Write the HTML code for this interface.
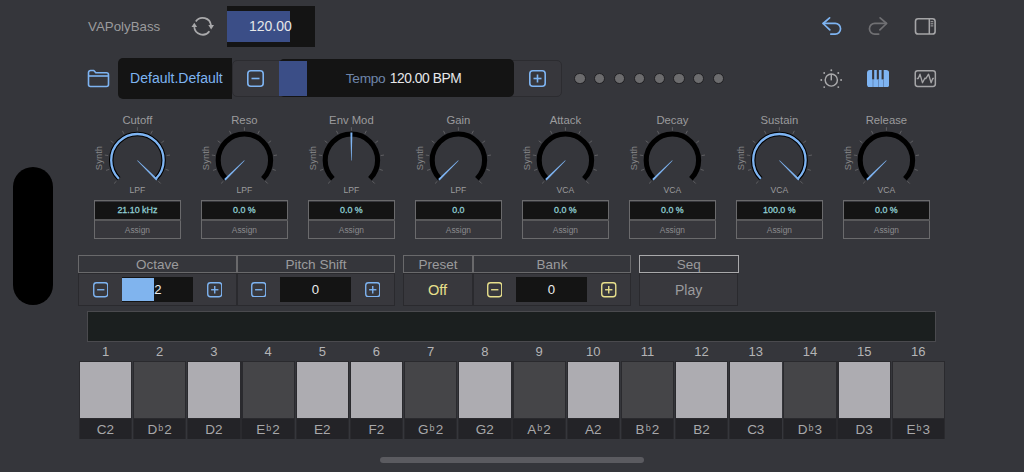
<!DOCTYPE html>
<html><head><meta charset="utf-8"><style>
html,body{margin:0;padding:0;width:1024px;height:472px;overflow:hidden;background:#35363b;font-family:'Liberation Sans', sans-serif;position:relative}
svg{display:block}
</style></head><body>
<div style="position:absolute;left:88.10px;top:19.64px;font-size:13.3px;line-height:13.3px;color:#9b9b9d;white-space:nowrap;">VAPolyBass</div>
<svg style="position:absolute;left:186px;top:10px" width="34" height="32" viewBox="0 0 34 32">
<path d="M9.8 11.4 A8.4 8.4 0 0 1 25 15.4" fill="none" stroke="#a9a9ab" stroke-width="1.75"/>
<path d="M23.4 21.2 A8.4 8.4 0 0 1 8.25 17.2" fill="none" stroke="#a9a9ab" stroke-width="1.75"/>
<polygon points="22.3,15.1 28,15.1 25.15,19.4" fill="#a9a9ab"/>
<polygon points="5.5,17 11.1,17 8.3,12.7" fill="#a9a9ab"/>
</svg>
<div style="position:absolute;left:226.6px;top:5.8px;width:88.1px;height:41.2px;background:#141414"></div>
<div style="position:absolute;left:226.6px;top:10.8px;width:63.4px;height:31.3px;background:#3b4e87"></div>
<div style="position:absolute;left:249.00px;top:19.35px;font-size:14px;line-height:14px;color:#e6e6e8;white-space:nowrap;">120.00</div>
<svg style="position:absolute;left:815px;top:10px" width="130" height="32" viewBox="815 10 130 32">
<path d="M823.3 23.4 H835.2 A5.35 5.35 0 0 1 835.2 34.1 H830.8" fill="none" stroke="#7eb4f2" stroke-width="1.7" stroke-linecap="round"/>
<path d="M829.6 17.9 L823.1 23.5 L829.8 29.9" fill="none" stroke="#7eb4f2" stroke-width="1.7" stroke-linecap="round" stroke-linejoin="round"/>
<path d="M886.3 23.4 H874.8 A5.35 5.35 0 0 0 874.8 34.1 H878.7" fill="none" stroke="#707073" stroke-width="1.7" stroke-linecap="round"/>
<path d="M880.1 17.9 L886.6 23.5 L879.9 29.9" fill="none" stroke="#707073" stroke-width="1.7" stroke-linecap="round" stroke-linejoin="round"/>
<rect x="915.5" y="18.7" width="19.6" height="15.3" rx="2.6" fill="none" stroke="#a5a5a7" stroke-width="1.6"/>
<line x1="929.3" y1="18.7" x2="929.3" y2="34" stroke="#a5a5a7" stroke-width="1.5"/>
<g stroke="#a5a5a7" stroke-width="1"><line x1="930.6" y1="21.7" x2="933.3" y2="21.7"/><line x1="930.6" y1="23.8" x2="933.3" y2="23.8"/><line x1="930.6" y1="25.9" x2="933.3" y2="25.9"/></g>
</svg>
<svg style="position:absolute;left:86px;top:68px" width="25" height="21" viewBox="0 0 25 21">
<path d="M2.5 4.5 A2 2 0 0 1 4.5 2.5 H7.8 L9.8 4.8 H20.5 A2 2 0 0 1 22.5 6.8 V16.5 A2 2 0 0 1 20.5 18.5 H4.5 A2 2 0 0 1 2.5 16.5 Z" fill="none" stroke="#7eb4f2" stroke-width="1.6" stroke-linejoin="round"/>
<line x1="2.5" y1="8" x2="22.5" y2="8" stroke="#7eb4f2" stroke-width="1.6"/>
</svg>
<div style="position:absolute;left:118px;top:58px;width:114px;height:41px;background:#141414;border-radius:5px 0 0 5px"></div>
<div style="position:absolute;left:130.10px;top:71.25px;font-size:14px;line-height:14px;color:#7eb4f2;white-space:nowrap;">Default.Default</div>
<div style="position:absolute;left:232px;top:60px;width:330px;height:37px;box-sizing:border-box;background:#37373c;border:1px solid #2c2c30;border-radius:5px"></div>
<div style="position:absolute;left:279px;top:59.2px;width:235px;height:38px;background:#141414;border-radius:5px"></div>
<div style="position:absolute;left:279px;top:61px;width:28px;height:35px;box-sizing:border-box;background:#3b4e87"></div>
<div style="position:absolute;left:345.80px;top:72.20px;font-size:13.7px;line-height:13.7px;color:#6f86ab;white-space:nowrap;letter-spacing:-0.3px">Tempo</div>
<div style="position:absolute;left:389.80px;top:72.12px;font-size:13.8px;line-height:13.8px;color:#e6e6e8;white-space:nowrap;letter-spacing:-0.45px">120.00 BPM</div>
<svg style="position:absolute;left:247px;top:70px" width="17" height="17" viewBox="0 0 17 17">
<rect x="0.8" y="0.8" width="15.4" height="15.4" rx="3" fill="none" stroke="#7eb4f2" stroke-width="1.6"/>
<line x1="4.5" y1="8.5" x2="12.5" y2="8.5" stroke="#7eb4f2" stroke-width="1.6"/></svg>
<svg style="position:absolute;left:529px;top:70px" width="17" height="17" viewBox="0 0 17 17">
<rect x="0.8" y="0.8" width="15.4" height="15.4" rx="3" fill="none" stroke="#7eb4f2" stroke-width="1.6"/>
<line x1="4.5" y1="8.5" x2="12.5" y2="8.5" stroke="#7eb4f2" stroke-width="1.6"/>
<line x1="8.5" y1="4.5" x2="8.5" y2="12.5" stroke="#7eb4f2" stroke-width="1.6"/></svg>
<div style="position:absolute;left:574.30px;top:72.6px;width:11.4px;height:11.4px;box-sizing:border-box;border-radius:50%;background:#6c6c6e;border:1.2px solid #202023"></div>
<div style="position:absolute;left:594.10px;top:72.6px;width:11.4px;height:11.4px;box-sizing:border-box;border-radius:50%;background:#6c6c6e;border:1.2px solid #202023"></div>
<div style="position:absolute;left:613.90px;top:72.6px;width:11.4px;height:11.4px;box-sizing:border-box;border-radius:50%;background:#6c6c6e;border:1.2px solid #202023"></div>
<div style="position:absolute;left:633.70px;top:72.6px;width:11.4px;height:11.4px;box-sizing:border-box;border-radius:50%;background:#6c6c6e;border:1.2px solid #202023"></div>
<div style="position:absolute;left:653.50px;top:72.6px;width:11.4px;height:11.4px;box-sizing:border-box;border-radius:50%;background:#6c6c6e;border:1.2px solid #202023"></div>
<div style="position:absolute;left:673.30px;top:72.6px;width:11.4px;height:11.4px;box-sizing:border-box;border-radius:50%;background:#6c6c6e;border:1.2px solid #202023"></div>
<div style="position:absolute;left:693.10px;top:72.6px;width:11.4px;height:11.4px;box-sizing:border-box;border-radius:50%;background:#6c6c6e;border:1.2px solid #202023"></div>
<div style="position:absolute;left:712.90px;top:72.6px;width:11.4px;height:11.4px;box-sizing:border-box;border-radius:50%;background:#6c6c6e;border:1.2px solid #202023"></div>
<svg style="position:absolute;left:814px;top:62px" width="34" height="32" viewBox="0 0 34 32">
<circle cx="17.3" cy="18" r="6.1" fill="none" stroke="#a9a9ab" stroke-width="1.45"/>
<line x1="17.3" y1="18.4" x2="17.3" y2="12" stroke="#a9a9ab" stroke-width="1.45"/>
<g fill="#a9a9ab"><circle cx="17.3" cy="8.3" r="0.95"/><circle cx="10.2" cy="11" r="0.95"/><circle cx="24.3" cy="11" r="0.95"/><circle cx="7.3" cy="18" r="0.95"/><circle cx="27.1" cy="18" r="0.95"/><circle cx="10.2" cy="25.1" r="0.95"/><circle cx="24.3" cy="25.1" r="0.95"/></g>
</svg>
<svg style="position:absolute;left:867px;top:70px" width="22.2" height="17.4" viewBox="0 0 22.2 17.4">
<rect x="0" y="0" width="22.2" height="17.4" rx="3" fill="#7eb4f2"/>
<g fill="#36363b"><rect x="5.1" y="0" width="2.1" height="9.4"/><rect x="9.8" y="0" width="2.1" height="9.4"/><rect x="14.6" y="0" width="2.1" height="9.4"/></g>
<g fill="#5d7fae"><rect x="5.6" y="9.4" width="0.8" height="8"/><rect x="11.1" y="9.4" width="0.8" height="8"/><rect x="16.2" y="9.4" width="0.8" height="8"/></g>
</svg>
<svg style="position:absolute;left:912px;top:66px" width="26" height="24" viewBox="0 0 26 24">
<rect x="3.25" y="4.65" width="20.1" height="15.8" rx="2.4" fill="none" stroke="#a5a5a7" stroke-width="1.5"/>
<polyline points="4.7,12.5 6.25,12.5 8,8.2 10.5,16.75 12.9,12.1 13.8,12.6 16.56,8.2 19.14,16.75 20.7,12.5 21.9,12.5" fill="none" stroke="#a5a5a7" stroke-width="1.3" stroke-linejoin="round"/>
</svg>
<svg style="position:absolute;left:97px;top:120px" width="80" height="80" viewBox="0 0 80 80"><line x1="19.47" y1="61.13" x2="17.07" y2="63.53" stroke="#5f5f62" stroke-width="1"/><line x1="12.25" y1="49.35" x2="9.02" y2="50.40" stroke="#5f5f62" stroke-width="1"/><line x1="11.16" y1="35.57" x2="7.81" y2="35.04" stroke="#5f5f62" stroke-width="1"/><line x1="16.45" y1="22.80" x2="13.70" y2="20.80" stroke="#5f5f62" stroke-width="1"/><line x1="26.96" y1="13.83" x2="25.42" y2="10.80" stroke="#5f5f62" stroke-width="1"/><line x1="40.40" y1="10.60" x2="40.40" y2="7.20" stroke="#5f5f62" stroke-width="1"/><line x1="53.84" y1="13.83" x2="55.38" y2="10.80" stroke="#5f5f62" stroke-width="1"/><line x1="64.35" y1="22.80" x2="67.10" y2="20.80" stroke="#5f5f62" stroke-width="1"/><line x1="69.64" y1="35.57" x2="72.99" y2="35.04" stroke="#5f5f62" stroke-width="1"/><line x1="68.55" y1="49.35" x2="71.78" y2="50.40" stroke="#5f5f62" stroke-width="1"/><line x1="61.33" y1="61.13" x2="63.73" y2="63.53" stroke="#5f5f62" stroke-width="1"/><path d="M21.87 58.73 A26.2 26.2 0 1 1 58.93 58.73" fill="none" stroke="#000" stroke-width="4.5"/><path d="M21.87 58.73 A26.2 26.2 0 1 1 58.93 58.73" fill="none" stroke="#7eb4f2" stroke-width="2.3"/><polygon points="40.22,40.68 59.21,60.42 60.62,59.01 40.58,40.32" fill="#7eb4f2"/></svg>
<div style="position:absolute;left:87.40px;top:114.73px;width:100px;text-align:center;font-size:11.3px;line-height:11.3px;color:#9b9b9d;white-space:nowrap;">Cutoff</div>
<div style="position:absolute;left:107.40px;top:186.12px;width:60px;text-align:center;font-size:8.6px;line-height:8.6px;color:#9b9b9d;white-space:nowrap;">LPF</div>
<div style="position:absolute;left:79.00px;top:152.90px;width:40px;height:10px;line-height:10px;font-size:9.3px;letter-spacing:0.1px;color:#8a8a8c;text-align:center;transform:rotate(-90deg);transform-origin:20px 5px">Synth</div>
<div style="position:absolute;left:93.50px;top:200px;width:87.4px;height:39px;box-sizing:border-box;border:1px solid #6a6a6c;background:#37373c"></div>
<div style="position:absolute;left:95.00px;top:201.5px;width:85px;height:17px;background:#141414"></div>
<div style="position:absolute;left:94.50px;top:219px;width:86px;height:2px;background:#58585a"></div>
<div style="position:absolute;left:93.40px;top:205.57px;width:88px;text-align:center;font-size:8.9px;line-height:8.9px;color:#8fcdd2;white-space:nowrap;-webkit-text-stroke:0.3px #8fcdd2">21.10 kHz</div>
<div style="position:absolute;left:93.40px;top:225.89px;width:88px;text-align:center;font-size:8.4px;line-height:8.4px;color:#8a8a8c;white-space:nowrap;">Assign</div>
<svg style="position:absolute;left:204px;top:120px" width="80" height="80" viewBox="0 0 80 80"><line x1="19.47" y1="61.13" x2="17.07" y2="63.53" stroke="#5f5f62" stroke-width="1"/><line x1="12.25" y1="49.35" x2="9.02" y2="50.40" stroke="#5f5f62" stroke-width="1"/><line x1="11.16" y1="35.57" x2="7.81" y2="35.04" stroke="#5f5f62" stroke-width="1"/><line x1="16.45" y1="22.80" x2="13.70" y2="20.80" stroke="#5f5f62" stroke-width="1"/><line x1="26.96" y1="13.83" x2="25.42" y2="10.80" stroke="#5f5f62" stroke-width="1"/><line x1="40.40" y1="10.60" x2="40.40" y2="7.20" stroke="#5f5f62" stroke-width="1"/><line x1="53.84" y1="13.83" x2="55.38" y2="10.80" stroke="#5f5f62" stroke-width="1"/><line x1="64.35" y1="22.80" x2="67.10" y2="20.80" stroke="#5f5f62" stroke-width="1"/><line x1="69.64" y1="35.57" x2="72.99" y2="35.04" stroke="#5f5f62" stroke-width="1"/><line x1="68.55" y1="49.35" x2="71.78" y2="50.40" stroke="#5f5f62" stroke-width="1"/><line x1="61.33" y1="61.13" x2="63.73" y2="63.53" stroke="#5f5f62" stroke-width="1"/><path d="M21.87 58.73 A26.2 26.2 0 1 1 58.93 58.73" fill="none" stroke="#000" stroke-width="5.1"/><polygon points="40.22,40.32 20.18,59.01 21.59,60.42 40.58,40.68" fill="#7eb4f2"/></svg>
<div style="position:absolute;left:194.40px;top:114.73px;width:100px;text-align:center;font-size:11.3px;line-height:11.3px;color:#9b9b9d;white-space:nowrap;">Reso</div>
<div style="position:absolute;left:214.40px;top:186.12px;width:60px;text-align:center;font-size:8.6px;line-height:8.6px;color:#9b9b9d;white-space:nowrap;">LPF</div>
<div style="position:absolute;left:186.00px;top:152.90px;width:40px;height:10px;line-height:10px;font-size:9.3px;letter-spacing:0.1px;color:#8a8a8c;text-align:center;transform:rotate(-90deg);transform-origin:20px 5px">Synth</div>
<div style="position:absolute;left:200.50px;top:200px;width:87.4px;height:39px;box-sizing:border-box;border:1px solid #6a6a6c;background:#37373c"></div>
<div style="position:absolute;left:202.00px;top:201.5px;width:85px;height:17px;background:#141414"></div>
<div style="position:absolute;left:201.50px;top:219px;width:86px;height:2px;background:#58585a"></div>
<div style="position:absolute;left:200.40px;top:205.57px;width:88px;text-align:center;font-size:8.9px;line-height:8.9px;color:#8fcdd2;white-space:nowrap;-webkit-text-stroke:0.3px #8fcdd2">0.0 %</div>
<div style="position:absolute;left:200.40px;top:225.89px;width:88px;text-align:center;font-size:8.4px;line-height:8.4px;color:#8a8a8c;white-space:nowrap;">Assign</div>
<svg style="position:absolute;left:311px;top:120px" width="80" height="80" viewBox="0 0 80 80"><line x1="19.47" y1="61.13" x2="17.07" y2="63.53" stroke="#5f5f62" stroke-width="1"/><line x1="12.25" y1="49.35" x2="9.02" y2="50.40" stroke="#5f5f62" stroke-width="1"/><line x1="11.16" y1="35.57" x2="7.81" y2="35.04" stroke="#5f5f62" stroke-width="1"/><line x1="16.45" y1="22.80" x2="13.70" y2="20.80" stroke="#5f5f62" stroke-width="1"/><line x1="26.96" y1="13.83" x2="25.42" y2="10.80" stroke="#5f5f62" stroke-width="1"/><line x1="40.40" y1="10.60" x2="40.40" y2="7.20" stroke="#5f5f62" stroke-width="1"/><line x1="53.84" y1="13.83" x2="55.38" y2="10.80" stroke="#5f5f62" stroke-width="1"/><line x1="64.35" y1="22.80" x2="67.10" y2="20.80" stroke="#5f5f62" stroke-width="1"/><line x1="69.64" y1="35.57" x2="72.99" y2="35.04" stroke="#5f5f62" stroke-width="1"/><line x1="68.55" y1="49.35" x2="71.78" y2="50.40" stroke="#5f5f62" stroke-width="1"/><line x1="61.33" y1="61.13" x2="63.73" y2="63.53" stroke="#5f5f62" stroke-width="1"/><path d="M21.87 58.73 A26.2 26.2 0 1 1 58.93 58.73" fill="none" stroke="#000" stroke-width="5.1"/><polygon points="40.65,40.50 41.40,12.60 39.40,12.60 40.15,40.50" fill="#7eb4f2"/></svg>
<div style="position:absolute;left:301.40px;top:114.73px;width:100px;text-align:center;font-size:11.3px;line-height:11.3px;color:#9b9b9d;white-space:nowrap;">Env Mod</div>
<div style="position:absolute;left:321.40px;top:186.12px;width:60px;text-align:center;font-size:8.6px;line-height:8.6px;color:#9b9b9d;white-space:nowrap;">LPF</div>
<div style="position:absolute;left:293.00px;top:152.90px;width:40px;height:10px;line-height:10px;font-size:9.3px;letter-spacing:0.1px;color:#8a8a8c;text-align:center;transform:rotate(-90deg);transform-origin:20px 5px">Synth</div>
<div style="position:absolute;left:307.50px;top:200px;width:87.4px;height:39px;box-sizing:border-box;border:1px solid #6a6a6c;background:#37373c"></div>
<div style="position:absolute;left:309.00px;top:201.5px;width:85px;height:17px;background:#141414"></div>
<div style="position:absolute;left:308.50px;top:219px;width:86px;height:2px;background:#58585a"></div>
<div style="position:absolute;left:307.40px;top:205.57px;width:88px;text-align:center;font-size:8.9px;line-height:8.9px;color:#8fcdd2;white-space:nowrap;-webkit-text-stroke:0.3px #8fcdd2">0.0 %</div>
<div style="position:absolute;left:307.40px;top:225.89px;width:88px;text-align:center;font-size:8.4px;line-height:8.4px;color:#8a8a8c;white-space:nowrap;">Assign</div>
<svg style="position:absolute;left:418px;top:120px" width="80" height="80" viewBox="0 0 80 80"><line x1="19.47" y1="61.13" x2="17.07" y2="63.53" stroke="#5f5f62" stroke-width="1"/><line x1="12.25" y1="49.35" x2="9.02" y2="50.40" stroke="#5f5f62" stroke-width="1"/><line x1="11.16" y1="35.57" x2="7.81" y2="35.04" stroke="#5f5f62" stroke-width="1"/><line x1="16.45" y1="22.80" x2="13.70" y2="20.80" stroke="#5f5f62" stroke-width="1"/><line x1="26.96" y1="13.83" x2="25.42" y2="10.80" stroke="#5f5f62" stroke-width="1"/><line x1="40.40" y1="10.60" x2="40.40" y2="7.20" stroke="#5f5f62" stroke-width="1"/><line x1="53.84" y1="13.83" x2="55.38" y2="10.80" stroke="#5f5f62" stroke-width="1"/><line x1="64.35" y1="22.80" x2="67.10" y2="20.80" stroke="#5f5f62" stroke-width="1"/><line x1="69.64" y1="35.57" x2="72.99" y2="35.04" stroke="#5f5f62" stroke-width="1"/><line x1="68.55" y1="49.35" x2="71.78" y2="50.40" stroke="#5f5f62" stroke-width="1"/><line x1="61.33" y1="61.13" x2="63.73" y2="63.53" stroke="#5f5f62" stroke-width="1"/><path d="M21.87 58.73 A26.2 26.2 0 1 1 58.93 58.73" fill="none" stroke="#000" stroke-width="5.1"/><polygon points="40.22,40.32 20.18,59.01 21.59,60.42 40.58,40.68" fill="#7eb4f2"/></svg>
<div style="position:absolute;left:408.40px;top:114.73px;width:100px;text-align:center;font-size:11.3px;line-height:11.3px;color:#9b9b9d;white-space:nowrap;">Gain</div>
<div style="position:absolute;left:428.40px;top:186.12px;width:60px;text-align:center;font-size:8.6px;line-height:8.6px;color:#9b9b9d;white-space:nowrap;">LPF</div>
<div style="position:absolute;left:400.00px;top:152.90px;width:40px;height:10px;line-height:10px;font-size:9.3px;letter-spacing:0.1px;color:#8a8a8c;text-align:center;transform:rotate(-90deg);transform-origin:20px 5px">Synth</div>
<div style="position:absolute;left:414.50px;top:200px;width:87.4px;height:39px;box-sizing:border-box;border:1px solid #6a6a6c;background:#37373c"></div>
<div style="position:absolute;left:416.00px;top:201.5px;width:85px;height:17px;background:#141414"></div>
<div style="position:absolute;left:415.50px;top:219px;width:86px;height:2px;background:#58585a"></div>
<div style="position:absolute;left:414.40px;top:205.57px;width:88px;text-align:center;font-size:8.9px;line-height:8.9px;color:#8fcdd2;white-space:nowrap;-webkit-text-stroke:0.3px #8fcdd2">0.0</div>
<div style="position:absolute;left:414.40px;top:225.89px;width:88px;text-align:center;font-size:8.4px;line-height:8.4px;color:#8a8a8c;white-space:nowrap;">Assign</div>
<svg style="position:absolute;left:525px;top:120px" width="80" height="80" viewBox="0 0 80 80"><line x1="19.47" y1="61.13" x2="17.07" y2="63.53" stroke="#5f5f62" stroke-width="1"/><line x1="12.25" y1="49.35" x2="9.02" y2="50.40" stroke="#5f5f62" stroke-width="1"/><line x1="11.16" y1="35.57" x2="7.81" y2="35.04" stroke="#5f5f62" stroke-width="1"/><line x1="16.45" y1="22.80" x2="13.70" y2="20.80" stroke="#5f5f62" stroke-width="1"/><line x1="26.96" y1="13.83" x2="25.42" y2="10.80" stroke="#5f5f62" stroke-width="1"/><line x1="40.40" y1="10.60" x2="40.40" y2="7.20" stroke="#5f5f62" stroke-width="1"/><line x1="53.84" y1="13.83" x2="55.38" y2="10.80" stroke="#5f5f62" stroke-width="1"/><line x1="64.35" y1="22.80" x2="67.10" y2="20.80" stroke="#5f5f62" stroke-width="1"/><line x1="69.64" y1="35.57" x2="72.99" y2="35.04" stroke="#5f5f62" stroke-width="1"/><line x1="68.55" y1="49.35" x2="71.78" y2="50.40" stroke="#5f5f62" stroke-width="1"/><line x1="61.33" y1="61.13" x2="63.73" y2="63.53" stroke="#5f5f62" stroke-width="1"/><path d="M21.87 58.73 A26.2 26.2 0 1 1 58.93 58.73" fill="none" stroke="#000" stroke-width="5.1"/><polygon points="40.22,40.32 20.18,59.01 21.59,60.42 40.58,40.68" fill="#7eb4f2"/></svg>
<div style="position:absolute;left:515.40px;top:114.73px;width:100px;text-align:center;font-size:11.3px;line-height:11.3px;color:#9b9b9d;white-space:nowrap;">Attack</div>
<div style="position:absolute;left:535.40px;top:186.12px;width:60px;text-align:center;font-size:8.6px;line-height:8.6px;color:#9b9b9d;white-space:nowrap;">VCA</div>
<div style="position:absolute;left:507.00px;top:152.90px;width:40px;height:10px;line-height:10px;font-size:9.3px;letter-spacing:0.1px;color:#8a8a8c;text-align:center;transform:rotate(-90deg);transform-origin:20px 5px">Synth</div>
<div style="position:absolute;left:521.50px;top:200px;width:87.4px;height:39px;box-sizing:border-box;border:1px solid #6a6a6c;background:#37373c"></div>
<div style="position:absolute;left:523.00px;top:201.5px;width:85px;height:17px;background:#141414"></div>
<div style="position:absolute;left:522.50px;top:219px;width:86px;height:2px;background:#58585a"></div>
<div style="position:absolute;left:521.40px;top:205.57px;width:88px;text-align:center;font-size:8.9px;line-height:8.9px;color:#8fcdd2;white-space:nowrap;-webkit-text-stroke:0.3px #8fcdd2">0.0 %</div>
<div style="position:absolute;left:521.40px;top:225.89px;width:88px;text-align:center;font-size:8.4px;line-height:8.4px;color:#8a8a8c;white-space:nowrap;">Assign</div>
<svg style="position:absolute;left:632px;top:120px" width="80" height="80" viewBox="0 0 80 80"><line x1="19.47" y1="61.13" x2="17.07" y2="63.53" stroke="#5f5f62" stroke-width="1"/><line x1="12.25" y1="49.35" x2="9.02" y2="50.40" stroke="#5f5f62" stroke-width="1"/><line x1="11.16" y1="35.57" x2="7.81" y2="35.04" stroke="#5f5f62" stroke-width="1"/><line x1="16.45" y1="22.80" x2="13.70" y2="20.80" stroke="#5f5f62" stroke-width="1"/><line x1="26.96" y1="13.83" x2="25.42" y2="10.80" stroke="#5f5f62" stroke-width="1"/><line x1="40.40" y1="10.60" x2="40.40" y2="7.20" stroke="#5f5f62" stroke-width="1"/><line x1="53.84" y1="13.83" x2="55.38" y2="10.80" stroke="#5f5f62" stroke-width="1"/><line x1="64.35" y1="22.80" x2="67.10" y2="20.80" stroke="#5f5f62" stroke-width="1"/><line x1="69.64" y1="35.57" x2="72.99" y2="35.04" stroke="#5f5f62" stroke-width="1"/><line x1="68.55" y1="49.35" x2="71.78" y2="50.40" stroke="#5f5f62" stroke-width="1"/><line x1="61.33" y1="61.13" x2="63.73" y2="63.53" stroke="#5f5f62" stroke-width="1"/><path d="M21.87 58.73 A26.2 26.2 0 1 1 58.93 58.73" fill="none" stroke="#000" stroke-width="5.1"/><polygon points="40.22,40.32 20.18,59.01 21.59,60.42 40.58,40.68" fill="#7eb4f2"/></svg>
<div style="position:absolute;left:622.40px;top:114.73px;width:100px;text-align:center;font-size:11.3px;line-height:11.3px;color:#9b9b9d;white-space:nowrap;">Decay</div>
<div style="position:absolute;left:642.40px;top:186.12px;width:60px;text-align:center;font-size:8.6px;line-height:8.6px;color:#9b9b9d;white-space:nowrap;">VCA</div>
<div style="position:absolute;left:614.00px;top:152.90px;width:40px;height:10px;line-height:10px;font-size:9.3px;letter-spacing:0.1px;color:#8a8a8c;text-align:center;transform:rotate(-90deg);transform-origin:20px 5px">Synth</div>
<div style="position:absolute;left:628.50px;top:200px;width:87.4px;height:39px;box-sizing:border-box;border:1px solid #6a6a6c;background:#37373c"></div>
<div style="position:absolute;left:630.00px;top:201.5px;width:85px;height:17px;background:#141414"></div>
<div style="position:absolute;left:629.50px;top:219px;width:86px;height:2px;background:#58585a"></div>
<div style="position:absolute;left:628.40px;top:205.57px;width:88px;text-align:center;font-size:8.9px;line-height:8.9px;color:#8fcdd2;white-space:nowrap;-webkit-text-stroke:0.3px #8fcdd2">0.0 %</div>
<div style="position:absolute;left:628.40px;top:225.89px;width:88px;text-align:center;font-size:8.4px;line-height:8.4px;color:#8a8a8c;white-space:nowrap;">Assign</div>
<svg style="position:absolute;left:739px;top:120px" width="80" height="80" viewBox="0 0 80 80"><line x1="19.47" y1="61.13" x2="17.07" y2="63.53" stroke="#5f5f62" stroke-width="1"/><line x1="12.25" y1="49.35" x2="9.02" y2="50.40" stroke="#5f5f62" stroke-width="1"/><line x1="11.16" y1="35.57" x2="7.81" y2="35.04" stroke="#5f5f62" stroke-width="1"/><line x1="16.45" y1="22.80" x2="13.70" y2="20.80" stroke="#5f5f62" stroke-width="1"/><line x1="26.96" y1="13.83" x2="25.42" y2="10.80" stroke="#5f5f62" stroke-width="1"/><line x1="40.40" y1="10.60" x2="40.40" y2="7.20" stroke="#5f5f62" stroke-width="1"/><line x1="53.84" y1="13.83" x2="55.38" y2="10.80" stroke="#5f5f62" stroke-width="1"/><line x1="64.35" y1="22.80" x2="67.10" y2="20.80" stroke="#5f5f62" stroke-width="1"/><line x1="69.64" y1="35.57" x2="72.99" y2="35.04" stroke="#5f5f62" stroke-width="1"/><line x1="68.55" y1="49.35" x2="71.78" y2="50.40" stroke="#5f5f62" stroke-width="1"/><line x1="61.33" y1="61.13" x2="63.73" y2="63.53" stroke="#5f5f62" stroke-width="1"/><path d="M21.87 58.73 A26.2 26.2 0 1 1 58.93 58.73" fill="none" stroke="#000" stroke-width="4.5"/><path d="M21.87 58.73 A26.2 26.2 0 1 1 58.93 58.73" fill="none" stroke="#7eb4f2" stroke-width="2.3"/><polygon points="40.22,40.68 59.21,60.42 60.62,59.01 40.58,40.32" fill="#7eb4f2"/></svg>
<div style="position:absolute;left:729.40px;top:114.73px;width:100px;text-align:center;font-size:11.3px;line-height:11.3px;color:#9b9b9d;white-space:nowrap;">Sustain</div>
<div style="position:absolute;left:749.40px;top:186.12px;width:60px;text-align:center;font-size:8.6px;line-height:8.6px;color:#9b9b9d;white-space:nowrap;">VCA</div>
<div style="position:absolute;left:721.00px;top:152.90px;width:40px;height:10px;line-height:10px;font-size:9.3px;letter-spacing:0.1px;color:#8a8a8c;text-align:center;transform:rotate(-90deg);transform-origin:20px 5px">Synth</div>
<div style="position:absolute;left:735.50px;top:200px;width:87.4px;height:39px;box-sizing:border-box;border:1px solid #6a6a6c;background:#37373c"></div>
<div style="position:absolute;left:737.00px;top:201.5px;width:85px;height:17px;background:#141414"></div>
<div style="position:absolute;left:736.50px;top:219px;width:86px;height:2px;background:#58585a"></div>
<div style="position:absolute;left:735.40px;top:205.57px;width:88px;text-align:center;font-size:8.9px;line-height:8.9px;color:#8fcdd2;white-space:nowrap;-webkit-text-stroke:0.3px #8fcdd2">100.0 %</div>
<div style="position:absolute;left:735.40px;top:225.89px;width:88px;text-align:center;font-size:8.4px;line-height:8.4px;color:#8a8a8c;white-space:nowrap;">Assign</div>
<svg style="position:absolute;left:846px;top:120px" width="80" height="80" viewBox="0 0 80 80"><line x1="19.47" y1="61.13" x2="17.07" y2="63.53" stroke="#5f5f62" stroke-width="1"/><line x1="12.25" y1="49.35" x2="9.02" y2="50.40" stroke="#5f5f62" stroke-width="1"/><line x1="11.16" y1="35.57" x2="7.81" y2="35.04" stroke="#5f5f62" stroke-width="1"/><line x1="16.45" y1="22.80" x2="13.70" y2="20.80" stroke="#5f5f62" stroke-width="1"/><line x1="26.96" y1="13.83" x2="25.42" y2="10.80" stroke="#5f5f62" stroke-width="1"/><line x1="40.40" y1="10.60" x2="40.40" y2="7.20" stroke="#5f5f62" stroke-width="1"/><line x1="53.84" y1="13.83" x2="55.38" y2="10.80" stroke="#5f5f62" stroke-width="1"/><line x1="64.35" y1="22.80" x2="67.10" y2="20.80" stroke="#5f5f62" stroke-width="1"/><line x1="69.64" y1="35.57" x2="72.99" y2="35.04" stroke="#5f5f62" stroke-width="1"/><line x1="68.55" y1="49.35" x2="71.78" y2="50.40" stroke="#5f5f62" stroke-width="1"/><line x1="61.33" y1="61.13" x2="63.73" y2="63.53" stroke="#5f5f62" stroke-width="1"/><path d="M21.87 58.73 A26.2 26.2 0 1 1 58.93 58.73" fill="none" stroke="#000" stroke-width="5.1"/><polygon points="40.22,40.32 20.18,59.01 21.59,60.42 40.58,40.68" fill="#7eb4f2"/></svg>
<div style="position:absolute;left:836.40px;top:114.73px;width:100px;text-align:center;font-size:11.3px;line-height:11.3px;color:#9b9b9d;white-space:nowrap;">Release</div>
<div style="position:absolute;left:856.40px;top:186.12px;width:60px;text-align:center;font-size:8.6px;line-height:8.6px;color:#9b9b9d;white-space:nowrap;">VCA</div>
<div style="position:absolute;left:828.00px;top:152.90px;width:40px;height:10px;line-height:10px;font-size:9.3px;letter-spacing:0.1px;color:#8a8a8c;text-align:center;transform:rotate(-90deg);transform-origin:20px 5px">Synth</div>
<div style="position:absolute;left:842.50px;top:200px;width:87.4px;height:39px;box-sizing:border-box;border:1px solid #6a6a6c;background:#37373c"></div>
<div style="position:absolute;left:844.00px;top:201.5px;width:85px;height:17px;background:#141414"></div>
<div style="position:absolute;left:843.50px;top:219px;width:86px;height:2px;background:#58585a"></div>
<div style="position:absolute;left:842.40px;top:205.57px;width:88px;text-align:center;font-size:8.9px;line-height:8.9px;color:#8fcdd2;white-space:nowrap;-webkit-text-stroke:0.3px #8fcdd2">0.0 %</div>
<div style="position:absolute;left:842.40px;top:225.89px;width:88px;text-align:center;font-size:8.4px;line-height:8.4px;color:#8a8a8c;white-space:nowrap;">Assign</div>
<div style="position:absolute;left:78px;top:255px;width:159px;height:18px;box-sizing:border-box;border:1.5px solid #69696b"></div>
<div style="position:absolute;left:78.00px;top:257.67px;width:159px;text-align:center;font-size:13.5px;line-height:13.5px;color:#9b9b9d;white-space:nowrap;">Octave</div>
<div style="position:absolute;left:78px;top:273px;width:159px;height:32.5px;box-sizing:border-box;border:1px solid #2a2a2e;background:#38383d"></div>
<div style="position:absolute;left:237px;top:255px;width:158px;height:18px;box-sizing:border-box;border:1.5px solid #69696b"></div>
<div style="position:absolute;left:237.00px;top:257.59px;width:158px;text-align:center;font-size:13.6px;line-height:13.6px;color:#9b9b9d;white-space:nowrap;">Pitch Shift</div>
<div style="position:absolute;left:237px;top:273px;width:158px;height:32.5px;box-sizing:border-box;border:1px solid #2a2a2e;background:#38383d"></div>
<div style="position:absolute;left:403px;top:255px;width:70px;height:18px;box-sizing:border-box;border:1.5px solid #69696b"></div>
<div style="position:absolute;left:403.00px;top:257.67px;width:70px;text-align:center;font-size:13.5px;line-height:13.5px;color:#9b9b9d;white-space:nowrap;">Preset</div>
<div style="position:absolute;left:403px;top:273px;width:70px;height:32.5px;box-sizing:border-box;border:1px solid #2a2a2e;background:#38383d"></div>
<div style="position:absolute;left:473px;top:255px;width:158px;height:18px;box-sizing:border-box;border:1.5px solid #69696b"></div>
<div style="position:absolute;left:473.00px;top:257.67px;width:158px;text-align:center;font-size:13.5px;line-height:13.5px;color:#9b9b9d;white-space:nowrap;">Bank</div>
<div style="position:absolute;left:473px;top:273px;width:158px;height:32.5px;box-sizing:border-box;border:1px solid #2a2a2e;background:#38383d"></div>
<div style="position:absolute;left:639px;top:255px;width:99.5px;height:18px;box-sizing:border-box;border:1.5px solid #a9a9ab"></div>
<div style="position:absolute;left:639.00px;top:257.67px;width:99.5px;text-align:center;font-size:13.5px;line-height:13.5px;color:#9b9b9d;white-space:nowrap;">Seq</div>
<div style="position:absolute;left:639px;top:273px;width:99px;height:32.5px;box-sizing:border-box;border:1px solid #2a2a2e;background:#38383d"></div>
<svg style="position:absolute;left:92.5px;top:282px" width="15.5" height="15.5" viewBox="0 0 17 17">
<rect x="0.8" y="0.8" width="15.4" height="15.4" rx="3" fill="none" stroke="#7eb4f2" stroke-width="1.5"/>
<line x1="4.5" y1="8.5" x2="12.5" y2="8.5" stroke="#7eb4f2" stroke-width="1.5"/></svg>
<svg style="position:absolute;left:206.8px;top:282px" width="15.5" height="15.5" viewBox="0 0 17 17">
<rect x="0.8" y="0.8" width="15.4" height="15.4" rx="3" fill="none" stroke="#7eb4f2" stroke-width="1.5"/>
<line x1="4.5" y1="8.5" x2="12.5" y2="8.5" stroke="#7eb4f2" stroke-width="1.5"/>
<line x1="8.5" y1="4.5" x2="8.5" y2="12.5" stroke="#7eb4f2" stroke-width="1.5"/></svg>
<div style="position:absolute;left:122px;top:277px;width:71px;height:24.5px;box-sizing:border-box;background:#141414"></div>
<div style="position:absolute;left:122px;top:278px;width:32px;height:23px;box-sizing:border-box;background:#80b4ee"></div>
<div style="position:absolute;left:154.30px;top:282.83px;font-size:13.2px;line-height:13.2px;color:#ececee;white-space:nowrap;">2</div>
<svg style="position:absolute;left:250.5px;top:281.5px" width="15.5" height="15.5" viewBox="0 0 17 17">
<rect x="0.8" y="0.8" width="15.4" height="15.4" rx="3" fill="none" stroke="#7eb4f2" stroke-width="1.5"/>
<line x1="4.5" y1="8.5" x2="12.5" y2="8.5" stroke="#7eb4f2" stroke-width="1.5"/></svg>
<svg style="position:absolute;left:364.8px;top:281.5px" width="15.5" height="15.5" viewBox="0 0 17 17">
<rect x="0.8" y="0.8" width="15.4" height="15.4" rx="3" fill="none" stroke="#7eb4f2" stroke-width="1.5"/>
<line x1="4.5" y1="8.5" x2="12.5" y2="8.5" stroke="#7eb4f2" stroke-width="1.5"/>
<line x1="8.5" y1="4.5" x2="8.5" y2="12.5" stroke="#7eb4f2" stroke-width="1.5"/></svg>
<div style="position:absolute;left:280px;top:277px;width:71px;height:24.5px;box-sizing:border-box;background:#141414"></div>
<div style="position:absolute;left:285.50px;top:282.83px;width:60px;text-align:center;font-size:13.2px;line-height:13.2px;color:#ececee;white-space:nowrap;">0</div>
<div style="position:absolute;left:407.50px;top:282.64px;width:60px;text-align:center;font-size:14.6px;line-height:14.6px;color:#e8e08c;white-space:nowrap;">Off</div>
<svg style="position:absolute;left:486.7px;top:282px" width="15.5" height="15.5" viewBox="0 0 17 17">
<rect x="0.8" y="0.8" width="15.4" height="15.4" rx="3" fill="none" stroke="#e8e08c" stroke-width="1.5"/>
<line x1="4.5" y1="8.5" x2="12.5" y2="8.5" stroke="#e8e08c" stroke-width="1.5"/></svg>
<svg style="position:absolute;left:601px;top:282px" width="15.5" height="15.5" viewBox="0 0 17 17">
<rect x="0.8" y="0.8" width="15.4" height="15.4" rx="3" fill="none" stroke="#e8e08c" stroke-width="1.5"/>
<line x1="4.5" y1="8.5" x2="12.5" y2="8.5" stroke="#e8e08c" stroke-width="1.5"/>
<line x1="8.5" y1="4.5" x2="8.5" y2="12.5" stroke="#e8e08c" stroke-width="1.5"/></svg>
<div style="position:absolute;left:516px;top:277px;width:71px;height:25px;box-sizing:border-box;background:#141414"></div>
<div style="position:absolute;left:521.50px;top:282.83px;width:60px;text-align:center;font-size:13.2px;line-height:13.2px;color:#ececee;white-space:nowrap;">0</div>
<div style="position:absolute;left:643.60px;top:282.85px;width:90px;text-align:center;font-size:14px;line-height:14px;color:#9b9b9d;white-space:nowrap;">Play</div>
<div style="position:absolute;left:87.2px;top:311px;width:848.5px;height:30.7px;box-sizing:border-box;border:1.5px solid #4a4a4e;background:#1b1f1f"></div>
<div style="position:absolute;left:78.80px;top:361px;width:53.4px;height:78px;box-sizing:border-box;background:#2a2a2e;border:1px solid #2a2a2e"></div>
<div style="position:absolute;left:80.00px;top:362px;width:51.3px;height:56px;background:#adacb1"></div>
<div style="position:absolute;left:79.80px;top:419px;width:51.5px;height:20px;background:#232327"></div>
<div style="position:absolute;left:80.50px;top:345.30px;width:50px;text-align:center;font-size:13px;line-height:13px;color:#b4b4b6;white-space:nowrap;">1</div>
<div style="position:absolute;left:80.50px;top:423.17px;width:50px;text-align:center;font-size:13.5px;line-height:13.5px;color:#a8a8aa;white-space:nowrap;">C2</div>
<div style="position:absolute;left:132.99px;top:361px;width:53.4px;height:78px;box-sizing:border-box;background:#2a2a2e;border:1px solid #2a2a2e"></div>
<div style="position:absolute;left:134.19px;top:362px;width:51.3px;height:56px;background:#454548"></div>
<div style="position:absolute;left:133.99px;top:419px;width:51.5px;height:20px;background:#232327"></div>
<div style="position:absolute;left:134.69px;top:345.30px;width:50px;text-align:center;font-size:13px;line-height:13px;color:#b4b4b6;white-space:nowrap;">2</div>
<div style="position:absolute;left:134.69px;top:423.17px;width:50px;text-align:center;font-size:13.5px;line-height:13.5px;color:#a8a8aa;white-space:nowrap;">D<span style="font-size:9px;position:relative;top:-3.4px;margin:0 1px 0 1px">b</span>2</div>
<div style="position:absolute;left:187.18px;top:361px;width:53.4px;height:78px;box-sizing:border-box;background:#2a2a2e;border:1px solid #2a2a2e"></div>
<div style="position:absolute;left:188.38px;top:362px;width:51.3px;height:56px;background:#adacb1"></div>
<div style="position:absolute;left:188.18px;top:419px;width:51.5px;height:20px;background:#232327"></div>
<div style="position:absolute;left:188.88px;top:345.30px;width:50px;text-align:center;font-size:13px;line-height:13px;color:#b4b4b6;white-space:nowrap;">3</div>
<div style="position:absolute;left:188.88px;top:423.17px;width:50px;text-align:center;font-size:13.5px;line-height:13.5px;color:#a8a8aa;white-space:nowrap;">D2</div>
<div style="position:absolute;left:241.37px;top:361px;width:53.4px;height:78px;box-sizing:border-box;background:#2a2a2e;border:1px solid #2a2a2e"></div>
<div style="position:absolute;left:242.57px;top:362px;width:51.3px;height:56px;background:#454548"></div>
<div style="position:absolute;left:242.37px;top:419px;width:51.5px;height:20px;background:#232327"></div>
<div style="position:absolute;left:243.07px;top:345.30px;width:50px;text-align:center;font-size:13px;line-height:13px;color:#b4b4b6;white-space:nowrap;">4</div>
<div style="position:absolute;left:243.07px;top:423.17px;width:50px;text-align:center;font-size:13.5px;line-height:13.5px;color:#a8a8aa;white-space:nowrap;">E<span style="font-size:9px;position:relative;top:-3.4px;margin:0 1px 0 1px">b</span>2</div>
<div style="position:absolute;left:295.56px;top:361px;width:53.4px;height:78px;box-sizing:border-box;background:#2a2a2e;border:1px solid #2a2a2e"></div>
<div style="position:absolute;left:296.76px;top:362px;width:51.3px;height:56px;background:#adacb1"></div>
<div style="position:absolute;left:296.56px;top:419px;width:51.5px;height:20px;background:#232327"></div>
<div style="position:absolute;left:297.26px;top:345.30px;width:50px;text-align:center;font-size:13px;line-height:13px;color:#b4b4b6;white-space:nowrap;">5</div>
<div style="position:absolute;left:297.26px;top:423.17px;width:50px;text-align:center;font-size:13.5px;line-height:13.5px;color:#a8a8aa;white-space:nowrap;">E2</div>
<div style="position:absolute;left:349.75px;top:361px;width:53.4px;height:78px;box-sizing:border-box;background:#2a2a2e;border:1px solid #2a2a2e"></div>
<div style="position:absolute;left:350.95px;top:362px;width:51.3px;height:56px;background:#adacb1"></div>
<div style="position:absolute;left:350.75px;top:419px;width:51.5px;height:20px;background:#232327"></div>
<div style="position:absolute;left:351.45px;top:345.30px;width:50px;text-align:center;font-size:13px;line-height:13px;color:#b4b4b6;white-space:nowrap;">6</div>
<div style="position:absolute;left:351.45px;top:423.17px;width:50px;text-align:center;font-size:13.5px;line-height:13.5px;color:#a8a8aa;white-space:nowrap;">F2</div>
<div style="position:absolute;left:403.94px;top:361px;width:53.4px;height:78px;box-sizing:border-box;background:#2a2a2e;border:1px solid #2a2a2e"></div>
<div style="position:absolute;left:405.14px;top:362px;width:51.3px;height:56px;background:#454548"></div>
<div style="position:absolute;left:404.94px;top:419px;width:51.5px;height:20px;background:#232327"></div>
<div style="position:absolute;left:405.64px;top:345.30px;width:50px;text-align:center;font-size:13px;line-height:13px;color:#b4b4b6;white-space:nowrap;">7</div>
<div style="position:absolute;left:405.64px;top:423.17px;width:50px;text-align:center;font-size:13.5px;line-height:13.5px;color:#a8a8aa;white-space:nowrap;">G<span style="font-size:9px;position:relative;top:-3.4px;margin:0 1px 0 1px">b</span>2</div>
<div style="position:absolute;left:458.13px;top:361px;width:53.4px;height:78px;box-sizing:border-box;background:#2a2a2e;border:1px solid #2a2a2e"></div>
<div style="position:absolute;left:459.33px;top:362px;width:51.3px;height:56px;background:#adacb1"></div>
<div style="position:absolute;left:459.13px;top:419px;width:51.5px;height:20px;background:#232327"></div>
<div style="position:absolute;left:459.83px;top:345.30px;width:50px;text-align:center;font-size:13px;line-height:13px;color:#b4b4b6;white-space:nowrap;">8</div>
<div style="position:absolute;left:459.83px;top:423.17px;width:50px;text-align:center;font-size:13.5px;line-height:13.5px;color:#a8a8aa;white-space:nowrap;">G2</div>
<div style="position:absolute;left:512.32px;top:361px;width:53.4px;height:78px;box-sizing:border-box;background:#2a2a2e;border:1px solid #2a2a2e"></div>
<div style="position:absolute;left:513.52px;top:362px;width:51.3px;height:56px;background:#454548"></div>
<div style="position:absolute;left:513.32px;top:419px;width:51.5px;height:20px;background:#232327"></div>
<div style="position:absolute;left:514.02px;top:345.30px;width:50px;text-align:center;font-size:13px;line-height:13px;color:#b4b4b6;white-space:nowrap;">9</div>
<div style="position:absolute;left:514.02px;top:423.17px;width:50px;text-align:center;font-size:13.5px;line-height:13.5px;color:#a8a8aa;white-space:nowrap;">A<span style="font-size:9px;position:relative;top:-3.4px;margin:0 1px 0 1px">b</span>2</div>
<div style="position:absolute;left:566.51px;top:361px;width:53.4px;height:78px;box-sizing:border-box;background:#2a2a2e;border:1px solid #2a2a2e"></div>
<div style="position:absolute;left:567.71px;top:362px;width:51.3px;height:56px;background:#adacb1"></div>
<div style="position:absolute;left:567.51px;top:419px;width:51.5px;height:20px;background:#232327"></div>
<div style="position:absolute;left:568.21px;top:345.30px;width:50px;text-align:center;font-size:13px;line-height:13px;color:#b4b4b6;white-space:nowrap;">10</div>
<div style="position:absolute;left:568.21px;top:423.17px;width:50px;text-align:center;font-size:13.5px;line-height:13.5px;color:#a8a8aa;white-space:nowrap;">A2</div>
<div style="position:absolute;left:620.70px;top:361px;width:53.4px;height:78px;box-sizing:border-box;background:#2a2a2e;border:1px solid #2a2a2e"></div>
<div style="position:absolute;left:621.90px;top:362px;width:51.3px;height:56px;background:#454548"></div>
<div style="position:absolute;left:621.70px;top:419px;width:51.5px;height:20px;background:#232327"></div>
<div style="position:absolute;left:622.40px;top:345.30px;width:50px;text-align:center;font-size:13px;line-height:13px;color:#b4b4b6;white-space:nowrap;">11</div>
<div style="position:absolute;left:622.40px;top:423.17px;width:50px;text-align:center;font-size:13.5px;line-height:13.5px;color:#a8a8aa;white-space:nowrap;">B<span style="font-size:9px;position:relative;top:-3.4px;margin:0 1px 0 1px">b</span>2</div>
<div style="position:absolute;left:674.89px;top:361px;width:53.4px;height:78px;box-sizing:border-box;background:#2a2a2e;border:1px solid #2a2a2e"></div>
<div style="position:absolute;left:676.09px;top:362px;width:51.3px;height:56px;background:#adacb1"></div>
<div style="position:absolute;left:675.89px;top:419px;width:51.5px;height:20px;background:#232327"></div>
<div style="position:absolute;left:676.59px;top:345.30px;width:50px;text-align:center;font-size:13px;line-height:13px;color:#b4b4b6;white-space:nowrap;">12</div>
<div style="position:absolute;left:676.59px;top:423.17px;width:50px;text-align:center;font-size:13.5px;line-height:13.5px;color:#a8a8aa;white-space:nowrap;">B2</div>
<div style="position:absolute;left:729.08px;top:361px;width:53.4px;height:78px;box-sizing:border-box;background:#2a2a2e;border:1px solid #2a2a2e"></div>
<div style="position:absolute;left:730.28px;top:362px;width:51.3px;height:56px;background:#adacb1"></div>
<div style="position:absolute;left:730.08px;top:419px;width:51.5px;height:20px;background:#232327"></div>
<div style="position:absolute;left:730.78px;top:345.30px;width:50px;text-align:center;font-size:13px;line-height:13px;color:#b4b4b6;white-space:nowrap;">13</div>
<div style="position:absolute;left:730.78px;top:423.17px;width:50px;text-align:center;font-size:13.5px;line-height:13.5px;color:#a8a8aa;white-space:nowrap;">C3</div>
<div style="position:absolute;left:783.27px;top:361px;width:53.4px;height:78px;box-sizing:border-box;background:#2a2a2e;border:1px solid #2a2a2e"></div>
<div style="position:absolute;left:784.47px;top:362px;width:51.3px;height:56px;background:#454548"></div>
<div style="position:absolute;left:784.27px;top:419px;width:51.5px;height:20px;background:#232327"></div>
<div style="position:absolute;left:784.97px;top:345.30px;width:50px;text-align:center;font-size:13px;line-height:13px;color:#b4b4b6;white-space:nowrap;">14</div>
<div style="position:absolute;left:784.97px;top:423.17px;width:50px;text-align:center;font-size:13.5px;line-height:13.5px;color:#a8a8aa;white-space:nowrap;">D<span style="font-size:9px;position:relative;top:-3.4px;margin:0 1px 0 1px">b</span>3</div>
<div style="position:absolute;left:837.46px;top:361px;width:53.4px;height:78px;box-sizing:border-box;background:#2a2a2e;border:1px solid #2a2a2e"></div>
<div style="position:absolute;left:838.66px;top:362px;width:51.3px;height:56px;background:#adacb1"></div>
<div style="position:absolute;left:838.46px;top:419px;width:51.5px;height:20px;background:#232327"></div>
<div style="position:absolute;left:839.16px;top:345.30px;width:50px;text-align:center;font-size:13px;line-height:13px;color:#b4b4b6;white-space:nowrap;">15</div>
<div style="position:absolute;left:839.16px;top:423.17px;width:50px;text-align:center;font-size:13.5px;line-height:13.5px;color:#a8a8aa;white-space:nowrap;">D3</div>
<div style="position:absolute;left:891.65px;top:361px;width:53.4px;height:78px;box-sizing:border-box;background:#2a2a2e;border:1px solid #2a2a2e"></div>
<div style="position:absolute;left:892.85px;top:362px;width:51.3px;height:56px;background:#454548"></div>
<div style="position:absolute;left:892.65px;top:419px;width:51.5px;height:20px;background:#232327"></div>
<div style="position:absolute;left:893.35px;top:345.30px;width:50px;text-align:center;font-size:13px;line-height:13px;color:#b4b4b6;white-space:nowrap;">16</div>
<div style="position:absolute;left:893.35px;top:423.17px;width:50px;text-align:center;font-size:13.5px;line-height:13.5px;color:#a8a8aa;white-space:nowrap;">E<span style="font-size:9px;position:relative;top:-3.4px;margin:0 1px 0 1px">b</span>3</div>
<div style="position:absolute;left:12.6px;top:167px;width:40.7px;height:138px;border-radius:20.3px;background:#000"></div>
<div style="position:absolute;left:380px;top:457px;width:264px;height:6px;border-radius:3px;background:#5b5b60"></div>
</body></html>
